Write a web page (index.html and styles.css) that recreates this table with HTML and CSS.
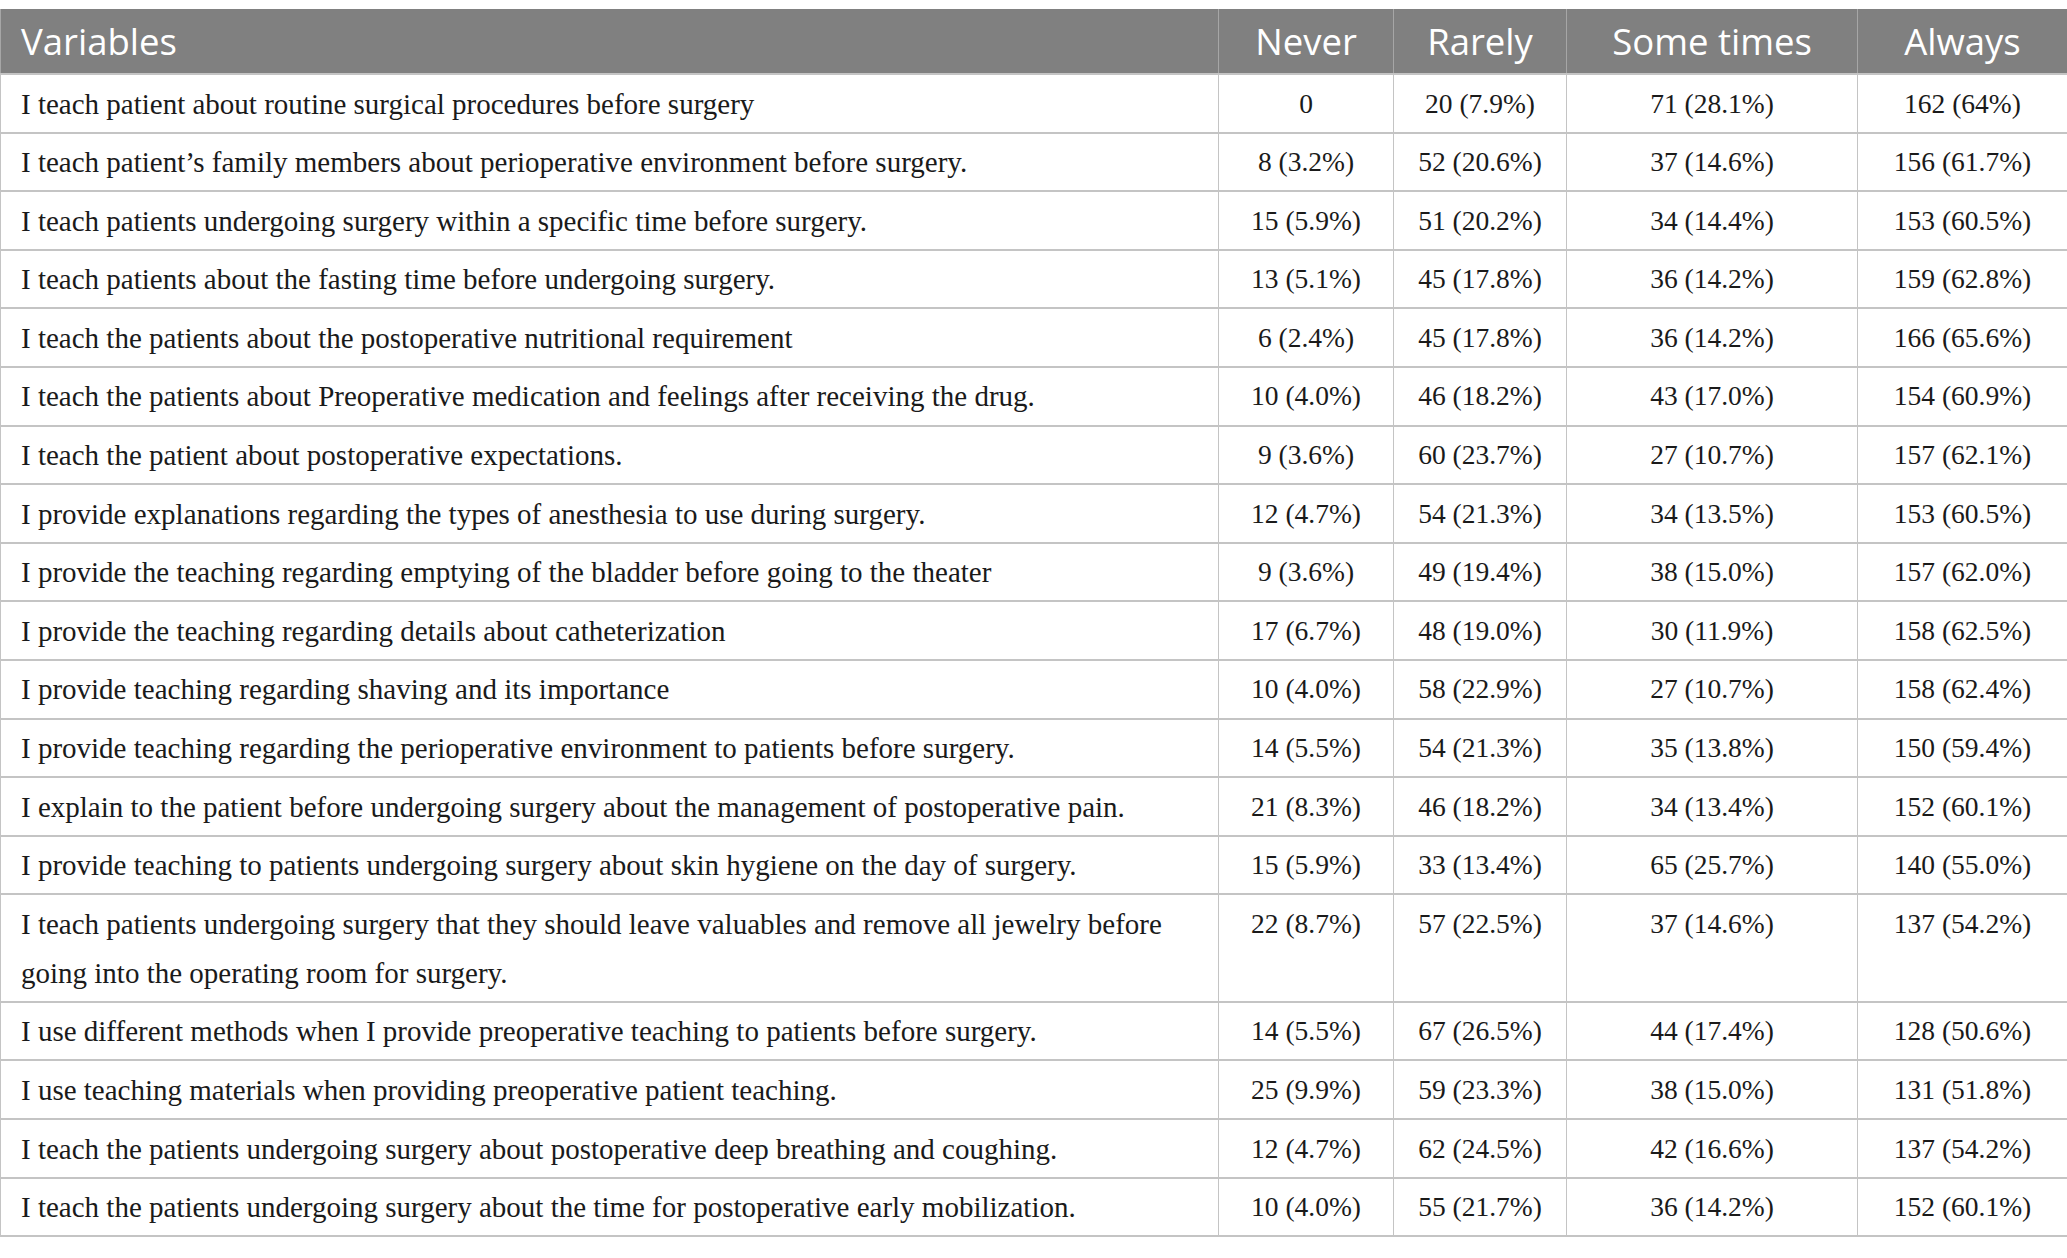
FILE: index.html
```html
<!DOCTYPE html>
<html lang="en">
  <head>
    <meta charset="UTF-8" />
    <meta name="viewport" content="width=device-width, initial-scale=1.0" />
    <title>Preoperative teaching practices</title>
    <link rel="stylesheet" href="styles.css">
  </head>
  <body>
    <table class="tabela">
      <colgroup>
        <col class="col-var" />
        <col class="col-never" />
        <col class="col-rarely" />
        <col class="col-some" />
        <col class="col-always" />
      </colgroup>
      <thead>
        <tr>
          <th class="esq">Variables</th>
          <th>Never</th>
          <th>Rarely</th>
          <th>Some times</th>
          <th>Always</th>
        </tr>
      </thead>
      <tbody>
        <tr><td>I teach patient about routine surgical procedures before surgery</td><td>0</td><td>20 (7.9%)</td><td>71 (28.1%)</td><td>162 (64%)</td></tr>
        <tr><td>I teach patient’s family members about perioperative environment before surgery.</td><td>8 (3.2%)</td><td>52 (20.6%)</td><td>37 (14.6%)</td><td>156 (61.7%)</td></tr>
        <tr><td>I teach patients undergoing surgery within a specific time before surgery.</td><td>15 (5.9%)</td><td>51 (20.2%)</td><td>34 (14.4%)</td><td>153 (60.5%)</td></tr>
        <tr><td>I teach patients about the fasting time before undergoing surgery.</td><td>13 (5.1%)</td><td>45 (17.8%)</td><td>36 (14.2%)</td><td>159 (62.8%)</td></tr>
        <tr><td>I teach the patients about the postoperative nutritional requirement</td><td>6 (2.4%)</td><td>45 (17.8%)</td><td>36 (14.2%)</td><td>166 (65.6%)</td></tr>
        <tr><td>I teach the patients about Preoperative medication and feelings after receiving the drug.</td><td>10 (4.0%)</td><td>46 (18.2%)</td><td>43 (17.0%)</td><td>154 (60.9%)</td></tr>
        <tr><td>I teach the patient about postoperative expectations.</td><td>9 (3.6%)</td><td>60 (23.7%)</td><td>27 (10.7%)</td><td>157 (62.1%)</td></tr>
        <tr><td>I provide explanations regarding the types of anesthesia to use during surgery.</td><td>12 (4.7%)</td><td>54 (21.3%)</td><td>34 (13.5%)</td><td>153 (60.5%)</td></tr>
        <tr><td>I provide the teaching regarding emptying of the bladder before going to the theater</td><td>9 (3.6%)</td><td>49 (19.4%)</td><td>38 (15.0%)</td><td>157 (62.0%)</td></tr>
        <tr><td>I provide the teaching regarding details about catheterization</td><td>17 (6.7%)</td><td>48 (19.0%)</td><td>30 (11.9%)</td><td>158 (62.5%)</td></tr>
        <tr><td>I provide teaching regarding shaving and its importance</td><td>10 (4.0%)</td><td>58 (22.9%)</td><td>27 (10.7%)</td><td>158 (62.4%)</td></tr>
        <tr><td>I provide teaching regarding the perioperative environment to patients before surgery.</td><td>14 (5.5%)</td><td>54 (21.3%)</td><td>35 (13.8%)</td><td>150 (59.4%)</td></tr>
        <tr><td>I explain to the patient before undergoing surgery about the management of postoperative pain.</td><td>21 (8.3%)</td><td>46 (18.2%)</td><td>34 (13.4%)</td><td>152 (60.1%)</td></tr>
        <tr><td>I provide teaching to patients undergoing surgery about skin hygiene on the day of surgery.</td><td>15 (5.9%)</td><td>33 (13.4%)</td><td>65 (25.7%)</td><td>140 (55.0%)</td></tr>
        <tr><td>I teach patients undergoing surgery that they should leave valuables and remove all jewelry before going into the operating room for surgery.</td><td>22 (8.7%)</td><td>57 (22.5%)</td><td>37 (14.6%)</td><td>137 (54.2%)</td></tr>
        <tr><td>I use different methods when I provide preoperative teaching to patients before surgery.</td><td>14 (5.5%)</td><td>67 (26.5%)</td><td>44 (17.4%)</td><td>128 (50.6%)</td></tr>
        <tr><td>I use teaching materials when providing preoperative patient teaching.</td><td>25 (9.9%)</td><td>59 (23.3%)</td><td>38 (15.0%)</td><td>131 (51.8%)</td></tr>
        <tr><td>I teach the patients undergoing surgery about postoperative deep breathing and coughing.</td><td>12 (4.7%)</td><td>62 (24.5%)</td><td>42 (16.6%)</td><td>137 (54.2%)</td></tr>
        <tr><td>I teach the patients undergoing surgery about the time for postoperative early mobilization.</td><td>10 (4.0%)</td><td>55 (21.7%)</td><td>36 (14.2%)</td><td>152 (60.1%)</td></tr>
      </tbody>
    </table>
  </body>
</html>
```

FILE: styles.css
```css
* {
  margin: 0;
  padding: 0;
  box-sizing: border-box;
}

body {
  background-color: #ffffff;
  padding-top: 9px;
}

.tabela {
  width: 2067px;
  table-layout: fixed;
  border-collapse: collapse;
  border-bottom: 2px solid #c4c4c4;
}

.col-var {
  width: 1218px;
}
.col-never {
  width: 175px;
}
.col-rarely {
  width: 173px;
}
.col-some {
  width: 291px;
}
.col-always {
  width: 210px;
}

th {
  height: 65px;
  background-color: #808080;
  color: #ffffff;
  font-family: "Open Sans", "Noto Sans", sans-serif;
  font-size: 36.5px;
  font-weight: 400;
  text-align: center;
  vertical-align: middle;
  border-left: 1px solid #a6a6a6;
  border-right: 1px solid #a6a6a6;
}
th.esq {
  text-align: left;
  padding-left: 20px;
}

td {
  padding: 4.5px 8px 3.2px 8px;
  font-family: "Liberation Serif", "Times New Roman", serif;
  font-size: 27.5px;
  line-height: 48.9px;
  color: #1a1a1a;
  text-align: center;
  vertical-align: top;
  border: 1px solid #c4c4c4;
  border-top: 2px solid #c4c4c4;
}
td:first-child {
  font-size: 29px;
  text-align: left;
  padding-left: 20px;
  padding-right: 30px;
}
```
